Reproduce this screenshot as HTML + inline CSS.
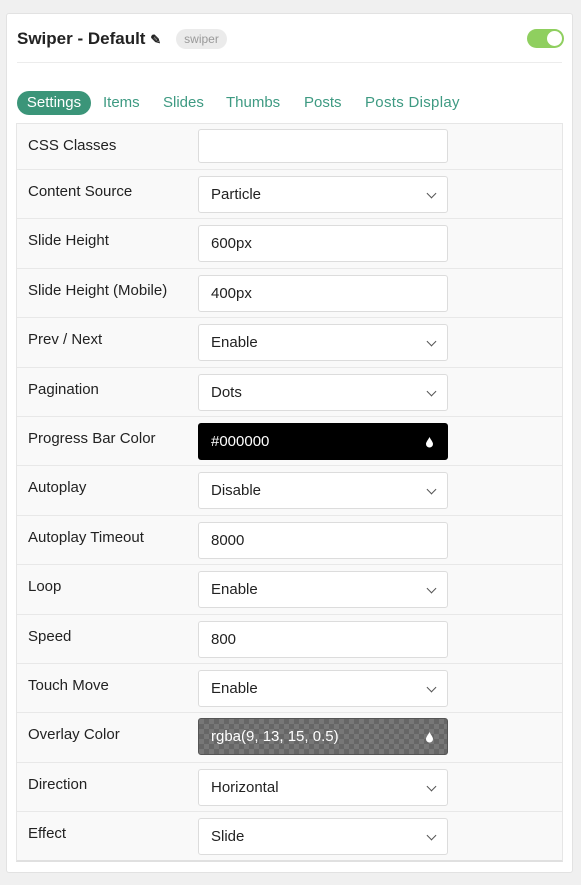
<!DOCTYPE html>
<html><head><style>
*{box-sizing:border-box;margin:0;padding:0}
body{width:581px;height:885px;background:#f0f0f0;font-family:"Liberation Sans",sans-serif;position:relative;overflow:hidden}
.card{position:absolute;left:6px;top:13px;width:567px;height:860px;background:#fff;border:1px solid #e2e2e2;border-radius:3px}
.title{position:absolute;left:10px;top:15px;font-size:17px;font-weight:bold;color:#222}
.tag{position:absolute;left:169px;top:15px;width:51px;height:20px;text-align:center;border-radius:10px;background:#ebebeb;color:#999;font-size:12px;line-height:20px}
.tog{position:absolute;left:520px;top:15px;width:37px;height:19px;border-radius:10px;background:#8fcf5f}
.tog:after{content:"";position:absolute;right:2px;top:2px;width:15px;height:15px;border-radius:50%;background:#fff}
.hr{position:absolute;left:10px;right:10px;top:48px;border-top:1px solid #ececec}
.tabs{position:absolute;left:0;top:77px;height:24px;font-size:15px;color:#3e9a82}
.tabs span{position:absolute;top:0;height:24px;line-height:24px;white-space:nowrap}
.tabs .act{background:#3b9579;color:#fff;border-radius:12px;width:74px;text-align:center}
.tbl{position:absolute;left:9px;top:109px;width:547px;border:1px solid #e6e6e6;background:#f9f9f9;border-bottom:2px solid #e0e0e0}
.row{position:relative;height:49.4px;border-top:1px solid #e8e8e8}
.row:first-child{height:45px;border-top:none}
.lab{position:absolute;left:11px;top:13px;font-size:15px;color:#222;line-height:18px}
.in{position:absolute;left:181px;top:6px;width:250px;height:37px;background:#fff;border:1px solid #dcdcdc;border-radius:3px;font-size:15px;color:#222;line-height:35px;padding-left:12px}
.row:first-child .in{top:5px;height:34px}
.sel:after{content:"";position:absolute;right:12px;top:13px;width:6px;height:6px;border-right:1.5px solid #555;border-bottom:1.5px solid #555;transform:rotate(45deg)}
.blk{background:#000;color:#fff;border-color:#000}
.chk{color:#fff;border-color:#555;background-color:#777;background-image:linear-gradient(45deg,#666 25%,transparent 25%,transparent 75%,#666 75%),linear-gradient(45deg,#666 25%,transparent 25%,transparent 75%,#666 75%);background-size:10px 10px;background-position:0 0,5px 5px}
.drop{position:absolute;right:13px;top:13px;width:9px;height:11px}
</style></head><body>
<div class="card">
<div class="title">Swiper - Default <span style="font-size:13px">✎</span></div>
<div class="tag">swiper</div>
<div class="tog"></div>
<div class="hr"></div>
<div class="tabs"><span class="act" style="left:10px">Settings</span><span style="left:96px">Items</span><span style="left:156px">Slides</span><span style="left:219px">Thumbs</span><span style="left:297px">Posts</span><span style="left:358px;letter-spacing:0.3px">Posts Display</span></div>
<div class="tbl">
<div class="row"><div class="lab">CSS Classes</div><div class="in"></div></div>
<div class="row"><div class="lab">Content Source</div><div class="in sel">Particle</div></div>
<div class="row"><div class="lab">Slide Height</div><div class="in">600px</div></div>
<div class="row"><div class="lab">Slide Height (Mobile)</div><div class="in">400px</div></div>
<div class="row"><div class="lab">Prev / Next</div><div class="in sel">Enable</div></div>
<div class="row"><div class="lab">Pagination</div><div class="in sel">Dots</div></div>
<div class="row"><div class="lab">Progress Bar Color</div><div class="in blk">#000000<svg class="drop" viewBox="0 0 9 11"><path d="M4.5 0C3 3 1 5 1 7a3.5 3.5 0 0 0 7 0C8 5 6 3 4.5 0z" fill="#fff"/></svg></div></div>
<div class="row"><div class="lab">Autoplay</div><div class="in sel">Disable</div></div>
<div class="row"><div class="lab">Autoplay Timeout</div><div class="in">8000</div></div>
<div class="row"><div class="lab">Loop</div><div class="in sel">Enable</div></div>
<div class="row"><div class="lab">Speed</div><div class="in">800</div></div>
<div class="row"><div class="lab">Touch Move</div><div class="in sel">Enable</div></div>
<div class="row"><div class="lab">Overlay Color</div><div class="in chk" style="top:5px">rgba(9, 13, 15, 0.5)<svg class="drop" viewBox="0 0 9 11"><path d="M4.5 0C3 3 1 5 1 7a3.5 3.5 0 0 0 7 0C8 5 6 3 4.5 0z" fill="#fff"/></svg></div></div>
<div class="row"><div class="lab">Direction</div><div class="in sel">Horizontal</div></div>
<div class="row"><div class="lab">Effect</div><div class="in sel">Slide</div></div>
</div>
</div>
</body></html>
